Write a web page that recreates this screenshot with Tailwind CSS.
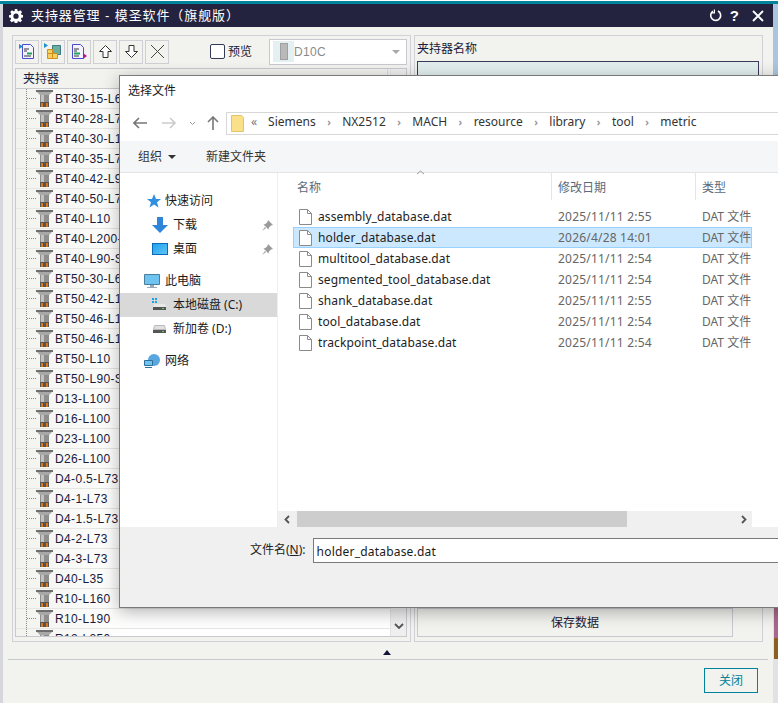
<!doctype html>
<html>
<head>
  <meta charset="UTF-8">
  <script src="https://cdn.jsdelivr.net/npm/@tailwindcss/browser@4"></script>
</head>
<body class="bg-white">
<div class="relative w-[778px] h-[703px] overflow-hidden bg-[#f2f2ee] text-[12px] text-[#1a1a3a] font-['Liberation_Sans','Noto_Sans_CJK_SC',sans-serif]">

  <!-- main window -->
  <div class="h-[1px] bg-white"></div>
  <div class="h-[3px] bg-[#00839b]"></div>
  <div class="h-[23px] bg-[#23233f] text-white flex items-center pl-[6px] pr-[14px] ml-[3px]">
    <svg width="14" height="14" viewBox="0 0 16 16"><path fill="#fff" fill-rule="evenodd" d="M6.600 0h2.800l.4 2.200 1.200.5L12.900 1.400l2 2-1.300 1.900.5 1.200 2.200.4v2.800l-2.200.4-.5 1.200 1.300 1.900-2 2-1.900-1.300-1.200.5-.4 2.200H6.600l-.4-2.200-1.200-.5-1.900 1.300-2-2 1.300-1.900-.5-1.200L0 9.800V7l2.200-.4.5-1.200L1.400 3.400l2-2 1.900 1.300 1.200-.5zM8 5.200a3 3 0 1 0 0 6 3 3 0 0 0 0-6z"/></svg>
    <span class="ml-[8px] text-[13px] tracking-[0.9px] whitespace-nowrap">夹持器管理 - 模圣软件（旗舰版）</span>
    <div class="ml-auto flex items-center">
      <svg width="13" height="13" viewBox="0 0 13 13" fill="none" stroke="#fff" stroke-width="1.600"><path d="M4 2.200A5 5 0 1 0 9 2"/><path d="M5.400 .4v3.400H2" stroke-width="1.200"/></svg>
      <span class="ml-[8px] font-bold text-[15px] leading-none">?</span>
      <svg class="ml-[13px]" width="12" height="12" viewBox="0 0 12 12" stroke="#fff" stroke-width="1.800"><path d="M1 1l10 10M11 1L1 11"/></svg>
    </div>
  </div>

  <div class="flex h-[625px] pt-[8px] pl-[12px]">
    <!-- left panel -->
    <div class="w-[399px] h-[607px] border border-[#d0d0d6] px-[2px] pt-[2px] pb-[4px] flex flex-col">
      <div class="h-[27px] flex items-center gap-[2px] shrink-0">
        <div class="flex items-center justify-center w-[24px] h-[24px] border border-[#cfcfd5]"><svg width="16" height="17" viewBox="0 0 16 17"><path fill="#f4f4ff" stroke="#4a4ad8" d="M3.500 1.500h8l3 3v11h-11z"/><path fill="#1f8fd0" d="M0 1l4 2.500L0 6z"/><path stroke="#333" d="M5 6h5M5 8h3M5 13h7"/><path stroke="#22a35a" stroke-width="2" d="M8 10.500h5"/></svg></div>
        <div class="flex items-center justify-center w-[24px] h-[24px] border border-[#cfcfd5]"><svg width="18" height="17" viewBox="0 0 18 17"><path fill="#1f8fd0" d="M0 0l4 2.500L0 5z"/><path fill="#6fae9a" stroke="#3a7a8a" d="M8.500 2.500h8v9h-8z"/><path fill="#f8cf5a" stroke="#d09020" d="M3.500 6.500h5v4h-5zM3.500 10.500h5v5h-5zM8.500 10.500h5v5h-5z"/></svg></div>
        <div class="flex items-center justify-center w-[24px] h-[24px] border border-[#cfcfd5]"><svg width="16" height="17" viewBox="0 0 16 17"><path fill="#f4f4ff" stroke="#4a4ad8" d="M1.500 1.500h8l3 3v11h-11z"/><path stroke="#333" d="M3 6h5M3 8h3M3 13h5"/><path stroke="#22a35a" stroke-width="2" d="M3 10.500h6"/><path fill="#b0189a" d="M12 10l4 3-4 3z"/></svg></div>
        <div class="flex items-center justify-center w-[24px] h-[24px] border border-[#cfcfd5]"><svg width="15" height="15" viewBox="0 0 15 15" fill="#fff" stroke="#333"><path d="M7.500 1.500l6 6h-3.500v6h-5v-6h-3.500z"/></svg></div>
        <div class="flex items-center justify-center w-[24px] h-[24px] border border-[#cfcfd5]"><svg width="15" height="15" viewBox="0 0 15 15" fill="#fff" stroke="#333"><path d="M7.500 13.500l6-6h-3.500v-6h-5v6h-3.500z"/></svg></div>
        <div class="flex items-center justify-center w-[24px] h-[24px] border border-[#cfcfd5]"><svg width="15" height="15" viewBox="0 0 15 15" stroke="#444"><path d="M1 1l13 13M14 1L1 14"/></svg></div>
        <div class="ml-[39px] w-[15px] h-[15px] shrink-0 border border-[#333a55] rounded-[2px] bg-white"></div>
        <span class="ml-[1px] text-[12px] whitespace-nowrap">预览</span>
        <div class="ml-[15px] w-[138px] h-[26px] shrink-0 border border-[#c8c8ce] bg-white flex items-center pl-[3px]">
          <div class="w-[21px] h-[21px] bg-[#e4f0f2] flex items-center justify-center"><div class="w-[8px] h-[17px] bg-[#b9b9b9] border border-[#a0a0a0]"></div></div>
          <span class="text-[12px] text-[#8a8a8a] tracking-[0.3px]">D10C</span>
          <div class="ml-auto mr-[6px] w-0 h-0 border-x-[4px] border-x-transparent border-t-[4px] border-t-[#a8a8a8]"></div>
        </div>
      </div>
      <div class="mt-[3px] w-[392px] flex-1 min-h-0 border border-[#c8c8ce] bg-white overflow-hidden flex">
        <div class="w-[374px]">
          <div class="h-[20px] bg-[#f2f2ee] border-b border-[#c8c8ce] pl-[7px] flex items-center relative">
            <span>夹持器</span>
            <div class="absolute right-[2px] top-0 bottom-0 border-l border-[#d8d8d8]"></div>
          </div>
          <div id="rows"></div>
        </div>
        <div class="w-[16px] ml-auto bg-[#efefef] border-l border-[#e4e4e4] flex items-end justify-center pb-[6px]">
          <svg width="10" height="7" viewBox="0 0 10 7" fill="none" stroke="#555" stroke-width="1.800"><path d="M1 1l4 4 4-4"/></svg>
        </div>
      </div>
    </div>

    <!-- right panel -->
    <div class="ml-[3px] w-[349px] h-[607px] border border-[#d0d0d6] flex flex-col">
      <div class="pl-[2px] h-[25px] flex items-center text-[12px]">夹持器名称</div>
      <div class="mx-[2px] w-[342px] h-[545px] border border-[#3a3a5a] bg-[#e2eeee]"></div>
      <div class="mx-[2px] mt-[2px] w-[316px] h-[29px] border border-[#c8c8d2] flex items-center justify-center">保存数据</div>
    </div>
  </div>

  <!-- footer -->
  <div class="absolute left-[8px] right-[10px] top-[659px] border-t border-[#c8c8d0]"></div>
  <div class="absolute left-[383px] top-[650px] w-0 h-0 border-x-[4.500px] border-x-transparent border-b-[5px] border-b-[#14143a]"></div>
  <div class="absolute left-[704px] top-[668px] w-[54px] h-[25px] border border-[#00839b] flex items-center justify-center text-[#00839b]">关闭</div>
  <div class="absolute left-0 top-[4px] w-[3px] h-[699px] bg-[#d6d6dd]"></div>
  <div class="absolute left-[773px] top-[4px] w-[5px] h-[699px] bg-[#a9c6de]"></div>
  <div class="absolute left-[774px] top-[608px] w-[4px] h-[30px] bg-[#a8688c]"></div>
  <div class="absolute left-[774px] top-[638px] w-[4px] h-[21px] bg-[#8a6020]"></div>
  <div class="absolute left-[773px] top-[608px] w-[1px] h-[51px] bg-[#e2e2e4]"></div>
  <div class="absolute left-[773px] top-[659px] w-[5px] h-[44px] bg-[#e2e2e4]"></div>

  <!-- file dialog -->
  <div class="absolute left-[119px] top-[75px] w-[680px] h-[533px] bg-white border border-[#7a7a7a] shadow-[0_4px_16px_rgba(0,0,0,0.3)] flex flex-col text-[#1a1a1a] font-['Noto_Sans','Noto_Sans_CJK_SC',sans-serif]">
    <div class="h-[29px] pl-[8px] flex items-center text-[12px]">选择文件</div>
    <div class="h-[36px] flex items-center pl-[13px]">
      <svg width="14" height="12" viewBox="0 0 14 12" fill="none" stroke="#777" stroke-width="1.600"><path d="M6 1L1 6l5 5M1 6h13"/></svg>
      <svg class="ml-[15px]" width="14" height="12" viewBox="0 0 14 12" fill="none" stroke="#ccc" stroke-width="1.600"><path d="M8 1l5 5-5 5M13 6H0"/></svg>
      <svg class="ml-[13px]" width="7" height="5" viewBox="0 0 7 5" fill="none" stroke="#999"><path d="M1 1l2.500 2.500L6 1"/></svg>
      <svg class="ml-[11px]" width="12" height="14" viewBox="0 0 12 14" fill="none" stroke="#777" stroke-width="1.600"><path d="M1 6l5-5 5 5M6 1v13"/></svg>
      <div class="ml-[7px] w-[560px] h-[23px] shrink-0 border-y border-l border-[#d8d8d8] flex items-center text-[12px] pb-[2px] whitespace-nowrap text-[#333]">
        <svg class="ml-[4px] mt-[2px]" width="13" height="17" viewBox="0 0 13 17"><path fill="#fbe08a" stroke="#e2c46a" d="M.500.500h10l2 2v14H.500z"/></svg>
        <span class="ml-[7px] text-[#777]">«</span>
        <span class="ml-[11px]">Siemens</span><span class="w-[26.500px] text-center text-[#999] text-[10px] font-bold">›</span>
        <span>NX2512</span><span class="w-[26.500px] text-center text-[#999] text-[10px] font-bold">›</span>
        <span>MACH</span><span class="w-[26.500px] text-center text-[#999] text-[10px] font-bold">›</span>
        <span>resource</span><span class="w-[26.500px] text-center text-[#999] text-[10px] font-bold">›</span>
        <span>library</span><span class="w-[26.500px] text-center text-[#999] text-[10px] font-bold">›</span>
        <span>tool</span><span class="w-[26.500px] text-center text-[#999] text-[10px] font-bold">›</span>
        <span>metric</span>
      </div>
    </div>
    <div class="h-[32px] bg-[#f5f6f7] border-b border-[#e4e4e4] flex items-center pl-[18px] text-[#333]">
      <span>组织</span>
      <div class="ml-[6px] w-0 h-0 border-x-[4px] border-x-transparent border-t-[4px] border-t-[#333]"></div>
      <span class="ml-[30px]">新建文件夹</span>
    </div>
    <div class="flex h-[338px]">
      <div class="w-[158px] border-r border-[#eeeeee] pt-[16px]">
        <div class="h-[24px] pl-[26px] flex items-center"><svg width="15" height="14" viewBox="0 0 15 14"><path fill="#2f8fe0" d="M8 0l2 5h5l-4 3.200 1.500 5.300L8 10.500 3.500 13.500 5 8.200 1 5h5z"/></svg><span class="ml-[4px]">快速访问</span></div>
        <div class="h-[24px] pl-[32px] flex items-center"><svg width="16" height="16" viewBox="0 0 16 16"><path fill="#2f86d8" d="M5 0h6v8h5l-8 8-8-8h5z"/></svg><span class="ml-[5px]">下载</span><svg class="ml-auto mr-[4px]" width="11" height="11" viewBox="0 0 11 11" fill="#9a9a9a"><path d="M6 0l5 5-2 .5-2 2-.5 2L1.500 4.500l2-.5 2-2zM3 7l-3 4 4-3z"/></svg></div>
        <div class="h-[24px] pl-[32px] flex items-center"><div class="w-[16px] h-[12px] bg-gradient-to-br from-[#19a3ee] to-[#5cc4f5] border border-[#0a6cb8]"></div><span class="ml-[5px]">桌面</span><svg class="ml-auto mr-[4px]" width="11" height="11" viewBox="0 0 11 11" fill="#9a9a9a"><path d="M6 0l5 5-2 .5-2 2-.5 2L1.500 4.500l2-.5 2-2zM3 7l-3 4 4-3z"/></svg></div>
        <div class="h-[32px] pl-[24px] pt-[8px] flex items-center"><svg width="16" height="15" viewBox="0 0 16 15"><path fill="#6fc3f0" stroke="#4a7f9c" d="M.500.500h15v10H.500z"/><path fill="#9ab" d="M6 11h4v2H6zM3 13h10v1H3z"/></svg><span class="ml-[5px]">此电脑</span></div>
        <div class="h-[24px] pl-[32px] bg-[#d9d9d9] flex items-center"><svg width="15" height="14" viewBox="0 0 15 14"><path fill="#19a3ee" d="M0 0h2v2H0zM3 0h2v2H3zM0 3h2v2H0zM3 3h2v2H3z"/><path fill="#e8e8e8" d="M2 6h11l1 3H1z"/><path fill="#555" d="M1 9h13v3H1z"/><path fill="#5fd35f" d="M10 10h2v1h-2z"/></svg><span class="ml-[6px]">本地磁盘 (C:)</span></div>
        <div class="h-[24px] pl-[32px] flex items-center"><svg width="15" height="14" viewBox="0 0 15 14"><path fill="#e0e0e0" stroke="#bbb" d="M2.500 3.500h10l1 4h-12z"/><path fill="#555" d="M1 8h13v3H1z"/><path fill="#5fd35f" d="M10 9h2v1h-2z"/></svg><span class="ml-[6px]">新加卷 (D:)</span></div>
        <div class="h-[32px] pl-[24px] pt-[8px] flex items-center"><svg width="16" height="15" viewBox="0 0 16 15"><circle cx="10" cy="6" r="6" fill="#5aa6e0"/><path fill="#6fc3f0" stroke="#2f6f9c" d="M.500 6.500h8v5h-8z"/><path fill="#2f6f9c" d="M1 13h7v1H1z"/></svg><span class="ml-[5px]">网络</span></div>
      </div>
      <div class="w-[474px] relative">
        <div class="h-[33px] flex items-end pb-[9px] text-[#5a6a7a] whitespace-nowrap">
          <span class="ml-[19px] w-[261px]">名称</span><span class="w-[144px]">修改日期</span><span>类型</span>
        </div>
        <div class="absolute left-[273px] top-0 h-[27px] border-l border-[#e4e4e4]"></div>
        <div class="absolute left-[417px] top-0 h-[27px] border-l border-[#e4e4e4]"></div>
        <svg class="absolute left-[138px] top-[-3px]" width="9" height="5" viewBox="0 0 9 5" fill="none" stroke="#999"><path d="M1 4l3.500-3L8 4"/></svg>
        <div id="files"></div>
      </div>
    </div>
    <div class="h-[16px] flex">
      <div class="w-[158px] border-r border-[#eeeeee]"></div>
      <div class="w-[474px] bg-[#f0f0f0] flex items-center">
        <svg class="ml-[6px]" width="6" height="9" viewBox="0 0 6 9" fill="none" stroke="#555" stroke-width="1.800"><path d="M5 1L1.500 4.500 5 8"/></svg>
        <div class="ml-[7px] w-[330px] h-full bg-[#cdcdcd]"></div>
        <svg class="ml-auto mr-[5px]" width="6" height="9" viewBox="0 0 6 9" fill="none" stroke="#555" stroke-width="1.800"><path d="M1 1l3.500 3.500L1 8"/></svg>
      </div>
    </div>
    <div class="flex-1 bg-[#f0f0f0] pt-[11px] flex items-start">
      <span class="ml-[130px] mt-[3px] text-[#222] whitespace-nowrap">文件名(<span class="underline">N</span>):</span>
      <div class="ml-[7px] flex-1 h-[25px] bg-white border border-[#7a7a7a] flex items-center pl-[3px] pt-[2px] text-[12px] tracking-[0.2px]">holder_database.dat</div>
    </div>
  </div>
</div>

<script>
  // tree rows and file rows are plain lists, so build them from data
  const holders = ['BT30-15-L6','BT40-28-L7','BT40-30-L1','BT40-35-L7','BT40-42-L9','BT40-50-L7','BT40-L10','BT40-L200-','BT40-L90-S','BT50-30-L6','BT50-42-L1','BT50-46-L1','BT50-46-L1','BT50-L10','BT50-L90-S','D13-L100','D16-L100','D23-L100','D26-L100','D4-0.5-L73','D4-1-L73','D4-1.5-L73','D4-2-L73','D4-3-L73','D40-L35','R10-L160','R10-L190','R12-L250'];
  const holderIcon = `<svg width="17" height="17" viewBox="0 0 17 17"><path fill="#6e6e6e" d="M0 0h17v2H0z"/><path fill="#a8a8a8" d="M1 2h15l-3 3H4z"/><path fill="#8e8e8e" d="M4 5h9v12H4z"/><path fill="#c2c2c2" d="M5 5h3v7H5z"/><path fill="#555" d="M4 12h9v5H4z"/><path fill="#d9761e" d="M5 13h2v4H5zM10 13h2v4h-2z"/></svg>`;
  document.getElementById('rows').innerHTML = holders.map(name => `
    <div class="h-[20px] border-b border-[#e6e6e2] flex items-center bg-gradient-to-r from-[#f2f2ee] to-white to-[30%] relative whitespace-nowrap">
      <div class="absolute left-[10px] top-0 bottom-0 border-l border-dotted border-[#888]"></div>
      <div class="ml-[11px] w-[9px] border-t border-dotted border-[#888]"></div>
      <span class="flex">${holderIcon}</span>
      <span class="ml-[2px] text-[12px] tracking-[0.35px]">${name}</span>
    </div>`).join('');

  const files = [
    ['assembly_database.dat','2025/11/11 2:55'],
    ['holder_database.dat','2026/4/28 14:01'],
    ['multitool_database.dat','2025/11/11 2:54'],
    ['segmented_tool_database.dat','2025/11/11 2:54'],
    ['shank_database.dat','2025/11/11 2:55'],
    ['tool_database.dat','2025/11/11 2:54'],
    ['trackpoint_database.dat','2025/11/11 2:54']
  ];
  const fileIcon = `<svg width="13" height="16" viewBox="0 0 13 16"><path fill="#fff" stroke="#8a8a8a" d="M.500.500h8l4 4v11H.500z"/><path fill="none" stroke="#8a8a8a" d="M8.500.500v4h4"/></svg>`;
  document.getElementById('files').innerHTML = files.map(([name, date], i) => `
    <div class="h-[21px] ml-[15px] flex items-center border overflow-hidden whitespace-nowrap ${i === 1 ? 'bg-[#cce8ff] border-[#99d1ff]' : 'border-transparent'}">
      <span class="ml-[5px] flex shrink-0">${fileIcon}</span>
      <span class="ml-[6px] w-[240px] shrink-0 text-[#222] tracking-[0.1px]">${name}</span>
      <span class="w-[144px] shrink-0 text-[#666] tracking-[0.2px]">${date}</span>
      <span class="text-[#666]">DAT 文件</span>
    </div>`).join('');
</script>
</body>
</html>
